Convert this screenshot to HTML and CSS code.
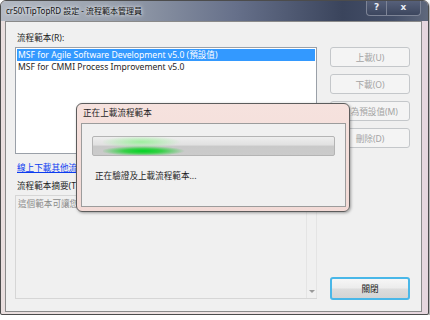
FILE: index.html
```html
<!DOCTYPE html>
<html>
<head>
    <meta charset="utf-8" />
    <title>流程範本管理員</title>
    <link rel="stylesheet" href="styles.css">
</head>
<body class="body">
    <div class="window">
        <div class="titlebar">
            <span class="title">cr50\TipTopRD 設定 - 流程範本管理員</span>
            <div class="caption">
                <span class="capBtn help">?</span>
                <span class="capBtn close">x</span>
            </div>
        </div>
        <div class="client">
            <div class="leftCol">
                <div class="label">流程範本(R):</div>
                <div class="listbox">
                    <div class="item selected">MSF for Agile Software Development v5.0 (預設值)</div>
                    <div class="item">MSF for CMMI Process Improvement v5.0</div>
                </div>
                <a class="link" href="#">線上下載其他流程範本</a>
                <div class="label second">流程範本摘要(T):</div>
                <div class="summary">
                    <div class="summaryText">這個範本可讓您的小組使用敏捷式方法。</div>
                    <div class="scroll"><span class="arrow"></span></div>
                </div>
            </div>
            <div class="rightCol">
                <button class="btn" disabled>上載(U)</button>
                <button class="btn" disabled>下載(O)</button>
                <button class="btn" disabled>設為預設值(M)</button>
                <button class="btn" disabled>刪除(D)</button>
                <button class="btn closeBtn">關閉</button>
            </div>
        </div>

        <div class="progressDlg">
            <div class="dlgTitle">正在上載流程範本</div>
            <div class="dlgClient">
                <div class="bar"><div class="glow"></div></div>
                <div class="dlgText">正在驗證及上載流程範本...</div>
            </div>
        </div>
    </div>
</body>
</html>
```

FILE: styles.css
```css
.body {
    margin: 0;
    background-color: white;
    font-family: "Noto Sans", "Noto Sans CJK TC", sans-serif;
    font-size: 8.6px;
    color: #1e1e1e;
}
.window {
    position: relative;
    width: 427px;
    height: 313px;
    border: 1px solid #4c4c4c;
    border-radius: 6px 6px 2px 2px;
    background: linear-gradient(to right, #e9dede, #efe3e3 50%, #e6d6de);
    box-shadow: 1px 2px 3px rgba(0, 0, 0, 0.45);
    display: flex;
    flex-direction: column;
}
.titlebar {
    height: 20px;
    display: flex;
    align-items: flex-start;
    border-radius: 5px 5px 0 0;
    background: linear-gradient(to right, #b3b9c3 0%, #9aa2ae 25%, #66708a 55%, #3a445c 80%, #455069 92%, #5f687c 100%);
}
.title {
    margin-left: 5px;
    margin-top: 3px;
    font-size: 8px;
    line-height: 14px;
    color: #111;
    text-shadow: 0 0 5px #e8ecf0, 0 0 3px #e8ecf0;
}
.caption {
    margin-left: auto;
    margin-right: 7px;
    display: flex;
}
.capBtn {
    height: 14px;
    border: 1px solid #7d8496;
    border-top: none;
    background: linear-gradient(#56607a, #3c465e);
    color: #e8ecf4;
    font-family: "DejaVu Sans", sans-serif;
    font-weight: bold;
    font-size: 9px;
    line-height: 13px;
    text-align: center;
}
.help {
    width: 19px;
    border-radius: 0 0 0 4px;
}
.close {
    width: 33px;
    border-left: none;
    border-radius: 0 0 4px 0;
}
.client {
    flex: 1;
    margin: 0 6px 2px 4px;
    border: 1px solid #8a8a8a;
    background-color: #f0f0f0;
    display: flex;
    gap: 13px;
    padding: 9px 9px 11px 9px;
}
.leftCol {
    width: 302px;
    display: flex;
    flex-direction: column;
}
.label {
    line-height: 14px;
    padding-left: 2px;
    margin-bottom: 2px;
}
.second {
    margin-top: 4px;
}
.listbox {
    height: 104px;
    border: 1px solid #9aa0a8;
    background-color: white;
    padding-top: 1px;
}
.item {
    height: 12px;
    line-height: 12px;
    padding-left: 2px;
    white-space: nowrap;
}
.selected {
    background-color: #3399ff;
    color: white;
    margin: 0 1px;
    padding-left: 1px;
}
.link {
    margin-top: 7px;
    line-height: 14px;
    padding-left: 2px;
    color: #0b3cf0;
    text-decoration: underline;
}
.summary {
    flex: 1;
    margin-bottom: 1px;
    border: 1px solid #d6d6d6;
    border-right: none;
    display: flex;
}
.summaryText {
    flex: 1;
    padding: 1px 2px;
    line-height: 14px;
    color: #8a8a8a;
    white-space: nowrap;
    overflow: hidden;
}
.scroll {
    width: 9px;
    border-left: 1px solid #e4e4e4;
    border-right: 1px solid #e4e4e4;
    display: flex;
    align-items: flex-end;
    justify-content: center;
}
.arrow {
    margin-bottom: 5px;
    border-left: 3px solid transparent;
    border-right: 3px solid transparent;
    border-top: 3px solid #9a9a9a;
}
.rightCol {
    width: 80px;
    display: flex;
    flex-direction: column;
    gap: 7px;
    padding-top: 16px;
}
.btn {
    height: 20px;
    border: 1px solid #c4c7ca;
    border-radius: 3px;
    background-color: #f4f4f4;
    color: #a3a3a3;
    font-family: inherit;
    font-size: 8.6px;
    padding: 0;
}
.closeBtn {
    margin-top: auto;
    height: 23px;
    border: 2px solid #49b7e8;
    color: #222;
    background: linear-gradient(#f6f6f6 0%, #ececec 48%, #dddddd 52%, #d4d4d4 100%);
}
.progressDlg {
    position: absolute;
    left: 75px;
    top: 102px;
    width: 272px;
    height: 107px;
    border: 1px solid #5c5c5c;
    border-radius: 6px;
    background: linear-gradient(#f6e2de, #f2dad6);
    box-shadow: 1px 1px 3px rgba(0, 0, 0, 0.35);
    display: flex;
    flex-direction: column;
}
.dlgTitle {
    height: 19px;
    line-height: 19px;
    padding-left: 6px;
}
.dlgClient {
    flex: 1;
    margin: 0 3px 4px 4px;
    border: 1px solid #9c9c9c;
    background-color: #f0f0f0;
    padding: 12px 10px 0 10px;
}
.bar {
    position: relative;
    height: 18px;
    border: 1px solid #b4b4b4;
    border-radius: 2px;
    background: linear-gradient(#eeeeee 0%, #e0e0e0 45%, #c9c9c9 50%, #cbcbcb 100%);
    overflow: hidden;
}
.glow {
    position: absolute;
    left: 10px;
    top: 0;
    width: 84px;
    height: 18px;
    background:
        radial-gradient(ellipse 42px 5px at 40px 14px, #00d424 0%, rgba(20, 210, 40, 0.8) 45%, rgba(60, 210, 70, 0) 100%),
        radial-gradient(ellipse 40px 6px at 38px 5px, rgba(150, 240, 150, 0.9) 0%, rgba(170, 240, 170, 0) 100%);
}
.dlgText {
    margin-top: 13px;
    padding-left: 3px;
    line-height: 14px;
}
```
